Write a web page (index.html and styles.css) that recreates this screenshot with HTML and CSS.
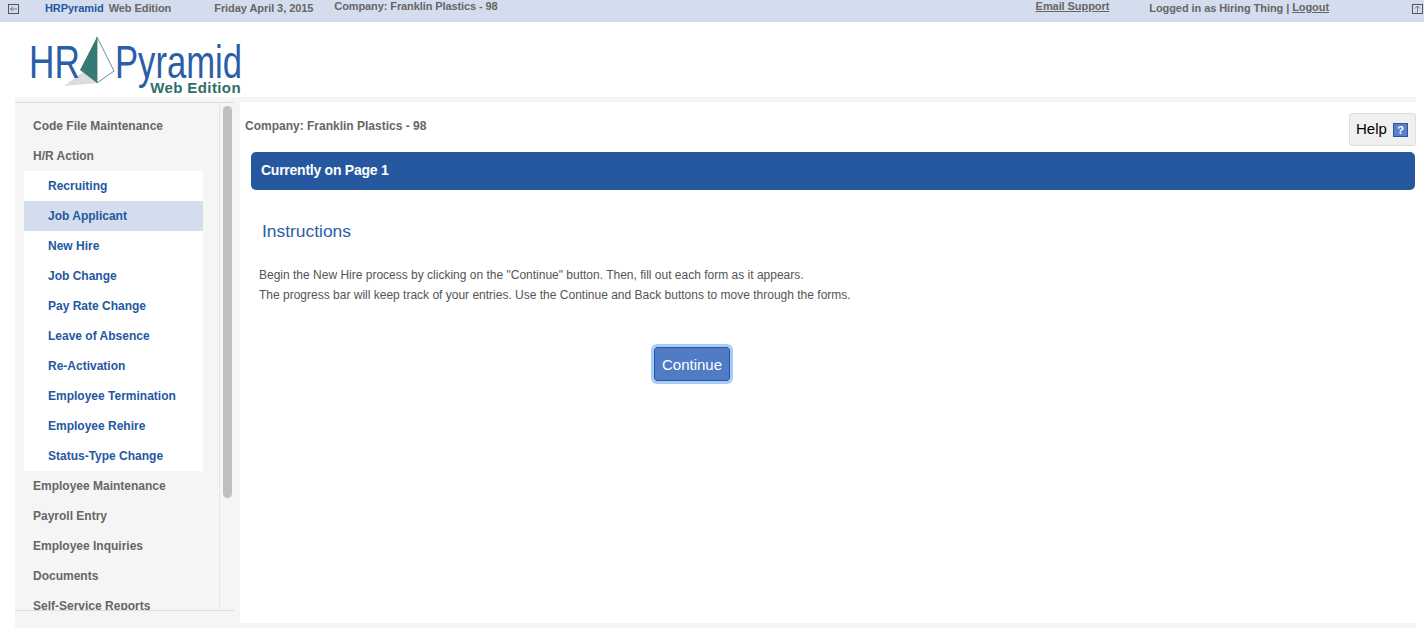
FILE: index.html
```html
<!DOCTYPE html>
<html>
<head>
    <title>HRPyramid Web Edition</title>
    <link rel="stylesheet" href="styles.css">
</head>
<body>
    <div class="topbar">
        <svg class="box-icon" width="11" height="10" viewBox="0 0 11 10"><rect x="0.5" y="0.5" width="10" height="9" fill="none" stroke="#555"/><path d="M9 5H2.5M5 2.5L2.5 5L5 7.5" fill="none" stroke="#555" stroke-width="0.7"/></svg>
        <span class="brand">HRPyramid</span>
        <span class="edition">Web Edition</span>
        <span class="date">Friday April 3, 2015</span>
        <span class="company">Company: Franklin Plastics - 98</span>
        <a class="support" href="#">Email Support</a>
        <span class="login">Logged in as Hiring Thing | <a href="#">Logout</a></span>
        <svg class="box-icon up-icon" width="11" height="10" viewBox="0 0 11 10"><rect x="0.5" y="0.5" width="10" height="9" fill="none" stroke="#555"/><path d="M5.5 8.5V2M3 4.5L5.5 2L8 4.5" fill="none" stroke="#555" stroke-width="0.7"/></svg>
    </div>

    <div class="logo">
        <span class="logo-hr">HR</span>
        <svg class="logo-mark" width="52" height="52" viewBox="0 0 52 52">
            <polygon points="0,50 19,36 33,47" fill="#dcdcdc"/>
            <polygon points="33,1 16,34 33,47" fill="#357a74"/>
            <polygon points="33,1 50,35 33,47" fill="#fff" stroke="#357a74" stroke-width="0.8"/>
        </svg>
        <div class="logo-right">
            <span class="logo-pyramid">Pyramid</span>
            <span class="logo-web">Web Edition</span>
        </div>
    </div>

    <div class="frame">
        <div class="sidebar">
            <div class="menu-scroll">
                <div class="menu">
                    <div class="menu-item">Code File Maintenance</div>
                    <div class="menu-item">H/R Action</div>
                    <div class="submenu">
                        <div class="sub-item">Recruiting</div>
                        <div class="sub-item active">Job Applicant</div>
                        <div class="sub-item">New Hire</div>
                        <div class="sub-item">Job Change</div>
                        <div class="sub-item">Pay Rate Change</div>
                        <div class="sub-item">Leave of Absence</div>
                        <div class="sub-item">Re-Activation</div>
                        <div class="sub-item">Employee Termination</div>
                        <div class="sub-item">Employee Rehire</div>
                        <div class="sub-item">Status-Type Change</div>
                    </div>
                    <div class="menu-item">Employee Maintenance</div>
                    <div class="menu-item">Payroll Entry</div>
                    <div class="menu-item">Employee Inquiries</div>
                    <div class="menu-item">Documents</div>
                    <div class="menu-item">Self-Service Reports</div>
                </div>
                <div class="scroll-track"><div class="scroll-thumb"></div></div>
            </div>
        </div>

        <div class="main">
            <div class="main-head">
                <span class="main-company">Company: Franklin Plastics - 98</span>
                <div class="help"><span class="help-label">Help</span>
                    <svg class="help-icon" width="15" height="15" viewBox="0 0 15 15"><rect x="0.5" y="0.5" width="14" height="13" fill="#5b7fc7" stroke="#2a55a0"/><text x="7.5" y="11" text-anchor="middle" class="help-mark">?</text></svg>
                </div>
            </div>
            <div class="page-bar">Currently on Page 1</div>
            <h2 class="title">Instructions</h2>
            <p class="intro">Begin the New Hire process by clicking on the "Continue" button. Then, fill out each form as it appears.<br>The progress bar will keep track of your entries. Use the Continue and Back buttons to move through the forms.</p>
            <div class="actions"><button class="continue">Continue</button></div>
        </div>
    </div>
</body>
</html>
```

FILE: styles.css
```css
html, body {
    margin: 0;
    padding: 0;
    height: 643px;
    overflow: hidden;
    background: #fff;
    font-family: "Liberation Sans", Arial, sans-serif;
}

.topbar {
    display: flex;
    height: 22px;
    background-color: #d4dded;
    color: #666;
    font-size: 11px;
    font-weight: bold;
    letter-spacing: -0.07px;
    line-height: 15px;
    padding-left: 8px;
    box-sizing: border-box;
}

.box-icon {
    margin-top: 4px;
    flex: none;
}

.brand {
    color: #25589f;
    margin-left: 26px;
    padding-top: 1px;
}

.edition {
    margin-left: 5px;
    padding-top: 1px;
}

.date {
    margin-left: 43px;
    padding-top: 1px;
}

.company {
    margin-left: 21px;
    margin-top: -1px;
    letter-spacing: -0.1px;
}

.support {
    color: #666;
    margin-left: auto;
    margin-top: -1px;
}

.login {
    margin-left: 40px;
    padding-top: 1px;
}

.login a {
    color: #666;
    position: relative;
    top: -1px;
}

.up-icon {
    margin-left: 83px;
    margin-right: 1px;
}

.logo {
    display: flex;
    height: 75px;
    padding-left: 29px;
    color: #2a5ea6;
    box-sizing: border-box;
}

.logo-hr {
    width: 53px;
    height: 50px;
    margin-top: 15px;
    font-size: 47px;
    line-height: 50px;
    transform: scaleX(0.75);
    transform-origin: left top;
}

.logo-mark {
    margin-left: -18px;
    margin-top: 14px;
    flex: none;
}

.logo-right {
    display: flex;
    flex-direction: column;
    align-items: flex-end;
    width: 127px;
    margin-left: -1px;
}

.logo-pyramid {
    width: 127px;
    height: 44px;
    margin-top: 15px;
    font-size: 47px;
    line-height: 50px;
    transform: scaleX(0.737);
    transform-origin: left top;
}

.logo-web {
    color: #2f6e68;
    font-weight: bold;
    font-size: 15px;
    line-height: 14px;
    letter-spacing: 0.4px;
    white-space: nowrap;
    margin-right: 1px;
}

.frame {
    display: flex;
    gap: 6px;
    width: 1401px;
    height: 531px;
    margin-left: 15px;
    padding: 5px 0;
    box-sizing: border-box;
    background-color: #f5f5f5;
}

.sidebar {
    width: 219px;
    flex: none;
}

.menu-scroll {
    display: flex;
    height: 509px;
    overflow: hidden;
    border-top: 1px solid #ddd;
    border-bottom: 1px solid #ddd;
    box-sizing: border-box;
}

.menu {
    width: 205px;
    padding: 8px 0 0 9px;
    box-sizing: border-box;
    border-right: 1px solid #e8e8e8;
    font-size: 12px;
    font-weight: bold;
    flex: none;
}

.menu-item {
    height: 30px;
    line-height: 30px;
    color: #666;
    padding-left: 9px;
}

.submenu {
    width: 179px;
    background: #fff;
    color: #25589f;
}

.sub-item {
    height: 30px;
    line-height: 30px;
    padding-left: 24px;
}

.sub-item.active {
    background-color: #d4dded;
}

.scroll-track {
    flex: 1;
    padding: 3px 0 0 3px;
}

.scroll-thumb {
    width: 9px;
    height: 392px;
    border-radius: 5px;
    background-color: #c0c0c0;
}

.main {
    flex: 1;
    background: #fff;
    height: 521px;
}

.main-head {
    display: flex;
    justify-content: space-between;
    align-items: flex-start;
    height: 50px;
}

.main-company {
    color: #666;
    font-size: 12px;
    font-weight: bold;
    line-height: 14px;
    margin: 17px 0 0 5px;
}

.help {
    display: flex;
    align-items: center;
    gap: 6px;
    width: 67px;
    height: 33px;
    margin-top: 11px;
    padding-left: 6px;
    box-sizing: border-box;
    background-color: #f0f0f0;
    border: 1px solid #ddd;
    border-radius: 3px;
    font-size: 15px;
    color: #000;
}

.help-label {
    margin-top: -2px;
}

.help-icon {
    flex: none;
    margin-top: 2px;
}

.help-mark {
    fill: #fff;
    font-size: 11px;
    font-weight: bold;
}

.page-bar {
    height: 38px;
    line-height: 36px;
    margin: 0 1px 0 11px;
    padding-left: 10px;
    background-color: #25589f;
    border-radius: 5px;
    color: #fff;
    font-size: 14px;
    font-weight: bold;
    letter-spacing: -0.25px;
}

.title {
    margin: 30px 0 0 22px;
    color: #2a5ea6;
    font-size: 17.4px;
    font-weight: normal;
    line-height: 22px;
}

.intro {
    margin: 23px 0 0 19px;
    color: #555;
    font-size: 12px;
    line-height: 20px;
}

.actions {
    display: flex;
    justify-content: center;
    margin-top: 42px;
    padding-right: 272px;
}

.continue {
    width: 76px;
    height: 34px;
    background-color: #4f7cc4;
    color: #fff;
    border: 1px solid #2a55a0;
    border-radius: 3px;
    outline: 3px solid #a5cdf7;
    font-family: "Liberation Sans", sans-serif;
    font-size: 15px;
    padding: 0;
}
```
